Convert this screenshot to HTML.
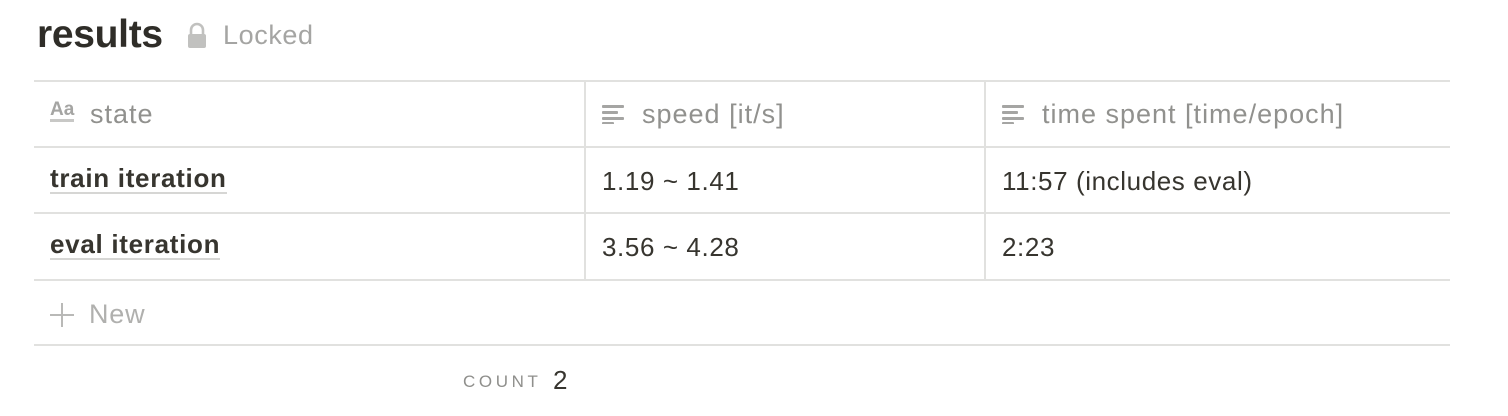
<!DOCTYPE html>
<html><head><style>
body{margin:0;width:1508px;height:416px;background:#fff;font-family:"Liberation Sans",sans-serif;position:relative;overflow:hidden}
.a{position:absolute;white-space:nowrap}
.h{background:#e1e1df;position:absolute}
.hd{color:#91918e;font-size:27px;letter-spacing:1px}
.c{color:#37352f;font-size:26px;letter-spacing:0.6px}
.b{font-weight:bold;color:#37352f;font-size:26px;letter-spacing:0.7px;border-bottom:2px solid #d6d6d4;line-height:27px}
.ic{position:absolute}
</style></head><body>
<div class="a" style="left:37px;top:13px;font-size:39px;font-weight:bold;color:#2f2d28;letter-spacing:-0.3px">results</div>
<svg class="ic" style="left:186px;top:22px" width="22" height="28" viewBox="0 0 22 28"><path d="M5 12V8a6 6 0 0 1 12 0v4" fill="none" stroke="#c1c1bf" stroke-width="2.6"/><rect x="2" y="12" width="18" height="14" rx="2" fill="#c1c1bf"/></svg>
<div class="a" style="left:223px;top:20px;font-size:27px;letter-spacing:0.6px;color:#a5a5a3">Locked</div>

<div class="h" style="left:34px;top:80px;width:1416px;height:2px"></div>
<div class="h" style="left:34px;top:146px;width:1416px;height:2px"></div>
<div class="h" style="left:34px;top:212px;width:1416px;height:2px"></div>
<div class="h" style="left:34px;top:279px;width:1416px;height:2px"></div>
<div class="h" style="left:34px;top:344px;width:1416px;height:2px"></div>
<div class="h" style="left:584px;top:82px;width:2px;height:197px"></div>
<div class="h" style="left:984px;top:82px;width:2px;height:197px"></div>

<div class="a" style="left:50px;top:101px;font-size:19px;font-weight:bold;color:#a5a5a3;border-bottom:3px solid #c8c8c6;line-height:18px">Aa</div>
<div class="a hd" style="left:90px;top:99px">state</div>
<svg class="ic" style="left:602px;top:104px" width="24" height="20"><g fill="#a5a5a3"><rect x="0" y="1" width="22" height="3" rx="1"/><rect x="0" y="7" width="16" height="3" rx="1"/><rect x="0" y="13" width="22" height="3" rx="1"/><rect x="0" y="18" width="12" height="2.5" rx="1"/></g></svg>
<div class="a hd" style="left:642px;top:99px">speed [it/s]</div>
<svg class="ic" style="left:1002px;top:104px" width="24" height="20"><g fill="#a5a5a3"><rect x="0" y="1" width="22" height="3" rx="1"/><rect x="0" y="7" width="16" height="3" rx="1"/><rect x="0" y="13" width="22" height="3" rx="1"/><rect x="0" y="18" width="12" height="2.5" rx="1"/></g></svg>
<div class="a hd" style="left:1042px;top:99px">time spent [time/epoch]</div>

<div class="a b" style="left:50px;top:165px">train iteration</div>
<div class="a c" style="left:602px;top:166px">1.19 ~ 1.41</div>
<div class="a c" style="left:1002px;top:166px">11:57 (includes eval)</div>
<div class="a b" style="left:50px;top:231px">eval iteration</div>
<div class="a c" style="left:602px;top:232px">3.56 ~ 4.28</div>
<div class="a c" style="left:1002px;top:232px">2:23</div>

<svg class="ic" style="left:49px;top:302px" width="26" height="26"><path d="M13 1V25M1 13H25" stroke="#b9b9b7" stroke-width="2"/></svg>
<div class="a" style="left:89px;top:299px;font-size:27px;letter-spacing:0.8px;color:#b0b0ae">New</div>

<div class="a" style="left:463px;top:372px;font-size:17px;color:#8f8f8c;letter-spacing:3.6px">COUNT</div>
<div class="a" style="left:553px;top:365px;font-size:26px;color:#37352f">2</div>
</body></html>
